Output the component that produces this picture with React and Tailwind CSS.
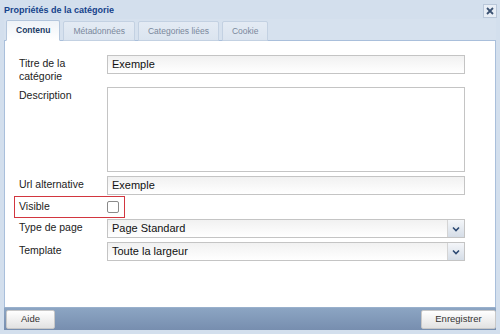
import { useState } from "react";

function Field({ label, children }) {
  return (
    <div className="flex items-start">
      <div className="w-[88px] pt-[2px] text-[10.5px] leading-[13px] text-[#222]">{label}</div>
      <div className="flex-1">{children}</div>
    </div>
  );
}

function TextInput({ value }) {
  return (
    <div className="h-[19px] border border-[#c4c4c4] bg-gradient-to-b from-[#f1f1f1] to-white px-[4px] leading-[17px] text-[#111]">
      {value}
    </div>
  );
}

function SelectBox({ value }) {
  return (
    <div className="flex h-[19px] border border-[#c4c4c4] bg-gradient-to-b from-[#f1f1f1] to-white">
      <div className="flex-1 px-[4px] leading-[17px] text-[#111]">{value}</div>
      <div className="flex w-[17px] items-center justify-center border-l border-[#d4d4d4] bg-gradient-to-b from-[#f4f6f9] to-[#d5dde7]">
        <svg width="8" height="6" viewBox="0 0 8 6">
          <path d="M1 1.5 L4 4.5 L7 1.5" fill="none" stroke="#2d4a73" strokeWidth="1.6" />
        </svg>
      </div>
    </div>
  );
}

export default function App() {
  const [tab, setTab] = useState("Contenu");
  const tabs = ["Contenu", "Métadonnées", "Categories liées", "Cookie"];

  return (
    <div className="flex h-[334px] w-[500px] flex-col bg-[#d3dfed] font-['Liberation_Sans',Arial,sans-serif] text-[11px]">
      {/* title bar */}
      <div className="flex h-[19px] items-center justify-between pl-[4px] pr-[3px] pt-[2px]">
        <span className="text-[9px] font-bold text-[#15428b]">Propriétés de la catégorie</span>
        <button className="flex h-[14px] w-[14px] items-center justify-center border border-[#b9c7d9] bg-[#e8eef6]">
          <svg width="8" height="8" viewBox="0 0 8 8">
            <path d="M1 1 L7 7 M7 1 L1 7" stroke="#3b5272" strokeWidth="1.8" />
          </svg>
        </button>
      </div>

      {/* tab strip */}
      <div className="mx-[4px] flex h-[22px] items-end gap-[3px] border-b border-[#a9bfdb] bg-[#d6e1ee] pl-[2px]">
        {tabs.map((t) => (
          <button
            key={t}
            onClick={() => setTab(t)}
            className={`mb-[-1px] rounded-t-[2px] border px-[9px] text-[8.5px] ${
              tab === t
                ? "h-[21px] border-[#b4c6dc] border-b-white bg-gradient-to-b from-[#eef3f8] to-white leading-[19px] font-bold text-[#1a3a66]"
                : "h-[20px] border-[#c3d1e2] bg-gradient-to-b from-[#e4ebf4] to-[#dbe4ef] leading-[18px] text-[#7a889c]"
            }`}
          >
            {t}
          </button>
        ))}
      </div>

      {/* body */}
      <div className="mx-[4px] flex flex-1 flex-col border-x border-[#a9bfdb] bg-white pl-[14px] pr-[30px] pt-[14px]">
        <Field label={<>Titre de la<br />catégorie</>}>
          <TextInput value="Exemple" />
        </Field>
        <div className="mt-[4px]">
          <Field label="Description">
            <div className="h-[85px] border border-[#c4c4c4] bg-white" />
          </Field>
        </div>
        <div className="mt-[4px]">
          <Field label="Url alternative">
            <TextInput value="Exemple" />
          </Field>
        </div>
        <div className="ml-[-5px] mt-[1px] flex h-[22px] w-[111px] items-center border border-[#d2363f] pl-[4px]">
          <div className="w-[88px] text-[10.5px] text-[#222]">Visible</div>
          <div className="h-[12px] w-[12px] rounded-[2px] border border-[#8a8a8a] bg-white" />
        </div>
        <div className="mt-[1px]">
          <Field label="Type de page">
            <SelectBox value="Page Standard" />
          </Field>
        </div>
        <div className="mt-[4px]">
          <Field label="Template">
            <SelectBox value="Toute la largeur" />
          </Field>
        </div>
      </div>

      {/* footer */}
      <div className="mx-[4px] flex h-[23px] items-center justify-between border-t border-[#99b0cc] bg-gradient-to-b from-[#8ca5c3] to-[#778eaf] pl-[2px] pr-[0px]">
        <button className="h-[19px] w-[49px] rounded-[2px] border border-[#c8c8c8] bg-gradient-to-b from-white to-[#e2e2e2] text-[9.5px] text-[#333]">
          Aide
        </button>
        <button className="h-[19px] w-[75px] rounded-[2px] border border-[#c8c8c8] bg-gradient-to-b from-white to-[#e2e2e2] text-[9.5px] text-[#333]">
          Enregistrer
        </button>
      </div>
      <div className="h-[4px]" />
    </div>
  );
}
